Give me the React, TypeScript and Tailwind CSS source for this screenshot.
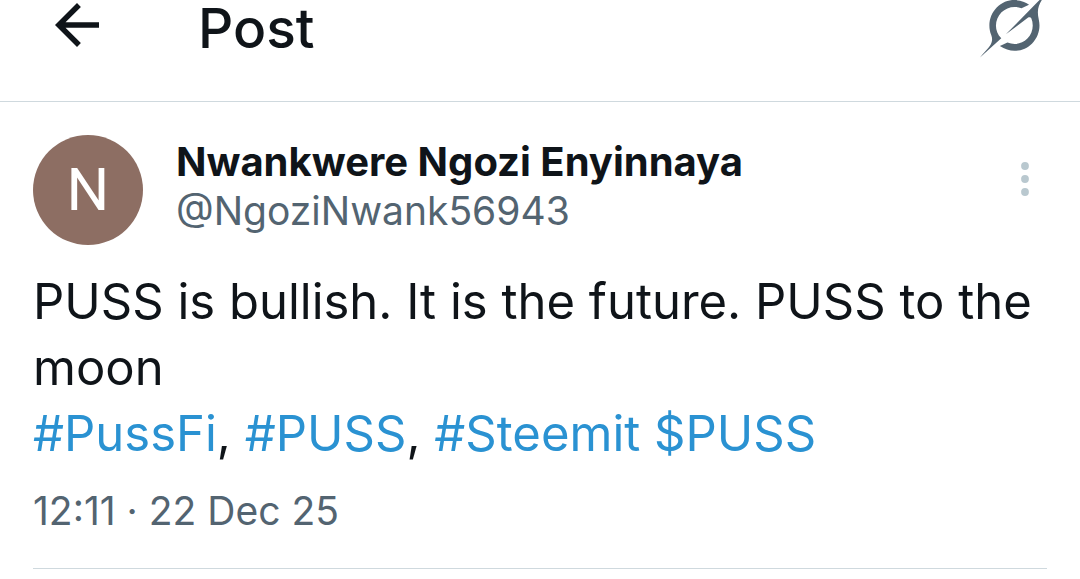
import type { ReactNode } from "react"

function GrokIcon() {
  return (
    <svg viewBox="0 0 33 32" className="h-[66px] w-[67px]" fill="currentColor" aria-hidden="true">
      <path d="M12.745 20.54l10.97-8.19c.539-.4 1.307-.244 1.564.38 1.349 3.288.746 7.241-1.938 9.955-2.683 2.714-6.417 3.31-9.83 1.954l-3.728 1.745c5.347 3.697 11.84 2.782 15.898-1.324 3.219-3.255 4.216-7.692 3.284-11.693l.008.009c-1.351-5.878.332-8.227 3.782-13.031L33 0l-4.54 4.59v-.014L12.743 20.544m-2.263 1.987c-3.837-3.707-3.175-9.446.1-12.755 2.42-2.449 6.388-3.448 9.852-1.979l3.72-1.737c-.67-.49-1.53-1.017-2.515-1.387-4.455-1.854-9.789-.931-13.41 2.728-3.483 3.523-4.579 8.94-2.697 13.561 1.405 3.454-.899 5.898-3.22 8.364C1.49 30.2.666 31.074 0 32l10.478-9.466" />
    </svg>
  )
}

function BackIcon() {
  return (
    <svg viewBox="0 0 24 24" className="size-[66px]" fill="currentColor" aria-hidden="true">
      <path d="M20 11H7.83l5.59-5.59L12 4l-8 8 8 8 1.41-1.41L7.83 13H20v-2z" />
    </svg>
  )
}

function MoreIcon() {
  return (
    <svg viewBox="0 0 24 24" className="size-[52px]" fill="currentColor" aria-hidden="true">
      <circle cx="12" cy="6" r="1.8" />
      <circle cx="12" cy="12" r="1.8" />
      <circle cx="12" cy="18" r="1.8" />
    </svg>
  )
}

function Tag({ children }: { children: ReactNode }) {
  return (
    <a href="#" className="text-[#2a92d2]">
      {children}
    </a>
  )
}

export default function App() {
  return (
    <div className="bg-white font-['Inter',sans-serif] text-[#0f1419]">
      {/* top bar is scrolled slightly under the window edge */}
      <header className="-mt-2 flex items-start border-b border-[#cfd9de] pr-[33px] pb-[37px] pl-11">
        <button type="button" aria-label="Back">
          <BackIcon />
        </button>
        <h1 className="ml-[88px] flex-1 text-[55px] leading-[72px] font-medium">Post</h1>
        <button type="button" aria-label="Grok" className="text-[#536471]">
          <GrokIcon />
        </button>
      </header>

      <main className="px-[33px] pt-[33px]">
        <article className="border-b border-[#cfd9de] pb-[33px]">
          <div className="flex items-start">
            <div className="flex size-[110px] shrink-0 items-center justify-center rounded-full bg-[#8d6e63] font-['Roboto',sans-serif] text-[60px] text-white">
              N
            </div>
            <div className="ml-[33px] min-w-0 flex-1 pt-0.5">
              <h2 className="text-[40px] leading-[49px] font-bold">Nwankwere Ngozi Enyinnaya</h2>
              <p className="text-[39px] leading-[49px] text-[#536471]">@NgoziNwank56943</p>
            </div>
            <button type="button" aria-label="More" className="mt-[18px] -mr-1 text-[#b9c8cf]">
              <MoreIcon />
            </button>
          </div>

          <p className="mt-6 text-[49px] leading-[66px]">
            PUSS is bullish. It is the future. PUSS to the moon
            <br />
            <Tag>#PussFi</Tag>, <Tag>#PUSS</Tag>, <Tag>#Steemit</Tag> <Tag>$PUSS</Tag>
          </p>

          <p className="mt-[19px] text-[39px] leading-[49px] text-[#536471]">
            <time dateTime="2025-12-22T12:11">12:11 · 22 Dec 25</time>
          </p>
        </article>
      </main>
    </div>
  )
}
